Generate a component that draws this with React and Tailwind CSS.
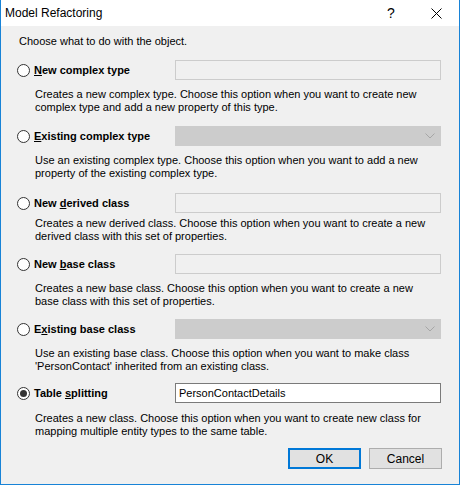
import React from "react";

const options = [
  {
    key: "complex",
    before: "",
    hot: "N",
    after: "ew complex type",
    field: "text",
    lines: [
      "Creates a new complex type. Choose this option when you want to create new",
      "complex type and add a new property of this type.",
    ],
    mt: "mt-[12px]",
    descMt: "mt-[8px]",
  },
  {
    key: "existingComplex",
    before: "",
    hot: "E",
    after: "xisting complex type",
    field: "combo",
    lines: [
      "Use an existing complex type. Choose this option when you want to add a new",
      "property of the existing complex type.",
    ],
    mt: "mt-[12px]",
    descMt: "mt-[8px]",
  },
  {
    key: "derived",
    before: "New ",
    hot: "d",
    after: "erived class",
    field: "text",
    lines: [
      "Creates a new derived class. Choose this option when you want to create a new",
      "derived class with this set of properties.",
    ],
    mt: "mt-[13px]",
    descMt: "mt-[4px]",
  },
  {
    key: "base",
    before: "New ",
    hot: "b",
    after: "ase class",
    field: "text",
    lines: [
      "Creates a new base class. Choose this option when you want to create a new",
      "base class with this set of properties.",
    ],
    mt: "mt-[11px]",
    descMt: "mt-[8px]",
  },
  {
    key: "existingBase",
    before: "E",
    hot: "x",
    after: "isting base class",
    field: "combo",
    lines: [
      "Use an existing base class. Choose this option when you want to make class",
      "'PersonContact' inherited from an existing class.",
    ],
    mt: "mt-[11px]",
    descMt: "mt-[8px]",
  },
  {
    key: "split",
    before: "Table ",
    hot: "s",
    after: "plitting",
    field: "value",
    value: "PersonContactDetails",
    checked: true,
    lines: [
      "Creates a new class. Choose this option when you want to create new class for",
      "mapping multiple entity types to the same table.",
    ],
    mt: "mt-[10px]",
    descMt: "mt-[9px]",
  },
];

const Radio = ({ checked }) => (
  <span className="w-[13px] h-[13px] rounded-full border border-[#333333] bg-white flex items-center justify-center shrink-0">
    {checked && <span className="w-[7px] h-[7px] rounded-full bg-[#333333]" />}
  </span>
);

const Field = ({ kind, value }) => {
  if (kind === "combo") {
    return (
      <div className="w-[266px] h-[20px] bg-[#cccccc] border border-[#cccccc] flex items-center justify-end pr-[5px]">
        <svg width="10" height="6" viewBox="0 0 10 6">
          <polyline points="0.5,0.5 5,5 9.5,0.5" fill="none" stroke="#a6a6a6" strokeWidth="1" />
        </svg>
      </div>
    );
  }
  if (kind === "value") {
    return (
      <div className="w-[266px] h-[20px] bg-white border border-[#7a7a7a] flex items-center pl-[3px] text-black">
        {value}
      </div>
    );
  }
  return <div className="w-[266px] h-[20px] bg-[#f0f0f0] border border-[#cccccc]" />;
};

const App = () => {
  return (
    <div
      className="w-[460px] h-[485px] flex flex-col bg-[#f0f0f0] border-x border-b border-[#1883d7] text-[11px] leading-[13px] text-black"
      style={{ fontFamily: '"Liberation Sans", Arial, sans-serif' }}
    >
      <div className="h-[26px] bg-white flex items-center relative shrink-0">
        <span className="ml-[4px] text-[12px] text-black">Model Refactoring</span>
        <span className="absolute left-[386px] top-[5px] text-[14px] leading-[16px] text-black">?</span>
        <svg className="absolute left-[430px] top-[8px]" width="11" height="11" viewBox="0 0 11 11">
          <path d="M0.5 0.5 L10.5 10.5 M10.5 0.5 L0.5 10.5" stroke="#000" strokeWidth="1" />
        </svg>
      </div>

      <div className="flex-1 pl-[16px]">
        <p className="mt-[9px] ml-[2px]">Choose what to do with the object.</p>

        {options.map((opt) => (
          <div key={opt.key} className={opt.mt}>
            <div className="flex items-center">
              <div className="w-[158px] flex items-center gap-[4px]">
                <Radio checked={opt.checked} />
                <span className="font-bold whitespace-nowrap">
                  {opt.before}
                  <span className="underline underline-offset-1">{opt.hot}</span>
                  {opt.after}
                </span>
              </div>
              <Field kind={opt.field} value={opt.value} />
            </div>
            <p className={`${opt.descMt} ml-[18px] whitespace-nowrap`}>
              {opt.lines[0]}
              <br />
              {opt.lines[1]}
            </p>
          </div>
        ))}

        <div className="mt-[10px] flex justify-end gap-[8px] pr-[17px]">
          <button className="w-[73px] h-[21px] bg-[#e1e1e1] border-2 border-[#0078d7] text-[12px] leading-none">
            OK
          </button>
          <button className="w-[73px] h-[21px] bg-[#e1e1e1] border border-[#adadad] text-[12px] leading-none">
            Cancel
          </button>
        </div>
      </div>
    </div>
  );
};

export default App;
